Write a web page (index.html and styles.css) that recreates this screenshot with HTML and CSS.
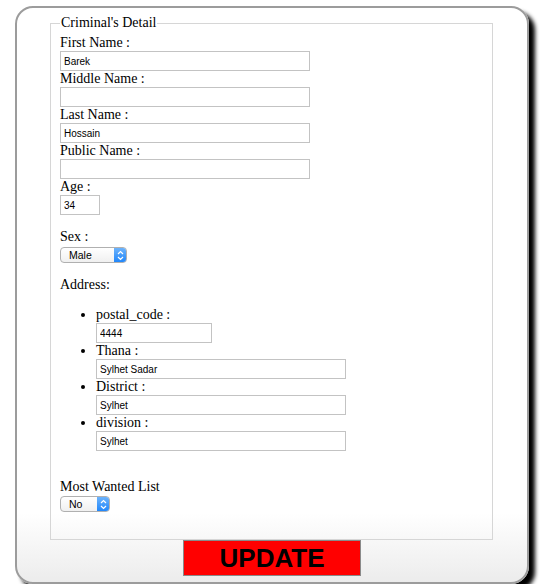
FILE: index.html
```html
<!DOCTYPE html>
<html>
<head>
<meta charset="utf-8">
<link rel="stylesheet" href="styles.css">
</head>
<body>
<form class="card">
  <fieldset class="detail">
    <legend class="legend">Criminal's Detail</legend>
    <div class="field"><label class="lbl">First Name :</label><input class="txt" type="text" value="Barek"></div>
    <div class="field"><label class="lbl">Middle Name :</label><input class="txt" type="text" value=""></div>
    <div class="field"><label class="lbl">Last Name :</label><input class="txt" type="text" value="Hossain"></div>
    <div class="field"><label class="lbl">Public Name :</label><input class="txt" type="text" value=""></div>
    <div class="field"><label class="lbl">Age :</label><input class="txt age" type="text" value="34"></div>
    <div class="field gap"><label class="lbl">Sex :</label>
      <span class="sel sel-sex"><select class="sel-input"><option>Male</option><option>Female</option></select><span class="arrows"><svg width="7" height="11" viewBox="0 0 7 11"><path d="M1 4 L3.5 1.5 L6 4 M1 7 L3.5 9.5 L6 7" fill="none" stroke="#fff" stroke-width="1.2"/></svg></span></span>
    </div>
    <div class="field gap"><label class="lbl">Address:</label>
      <ul class="addr">
        <li><label class="lbl">postal_code :</label><input class="txt postal" type="text" value="4444"></li>
        <li><label class="lbl">Thana :</label><input class="txt" type="text" value="Sylhet Sadar"></li>
        <li><label class="lbl">District :</label><input class="txt" type="text" value="Sylhet"></li>
        <li><label class="lbl">division :</label><input class="txt" type="text" value="Sylhet"></li>
      </ul>
    </div>
    <div class="field gap2"><label class="lbl">Most Wanted List</label>
      <span class="sel sel-mw"><select class="sel-input"><option>No</option><option>Yes</option></select><span class="arrows"><svg width="7" height="11" viewBox="0 0 7 11"><path d="M1 4 L3.5 1.5 L6 4 M1 7 L3.5 9.5 L6 7" fill="none" stroke="#fff" stroke-width="1.2"/></svg></span></span>
    </div>
  </fieldset>
  <div class="actions"><button class="update" type="button">UPDATE</button></div>
</form>
</body>
</html>
```
FILE: styles.css
```css
html, body {
  margin: 0;
  padding: 0;
  background: #fff;
}
body {
  font-family: "Liberation Serif", "Times New Roman", serif;
  font-size: 14px;
  color: #000;
}
.card {
  box-sizing: border-box;
  width: 514px;
  height: 578px;
  margin: 6px 0 0 15px;
  border: 2px solid #9c9c9c;
  border-radius: 18px;
  box-shadow: 6px 6px 4px #000;
  background: linear-gradient(to bottom, #ffffff 0%, #ffffff 88%, #ececec 100%);
  padding: 7px 0 0 33px;
}
.detail {
  box-sizing: border-box;
  width: 443px;
  margin: 0;
  border: 1px solid #d6d6d6;
  padding: 4px 9px 27px 9px;
  min-width: 0;
}
.legend {
  padding: 0 1px;
  line-height: 16px;
  font-size: 14px;
}
.field {
  margin: 0;
}
.gap {
  margin-top: 14px;
}
.gap2 {
  margin-top: 28px;
}
.lbl {
  display: block;
  line-height: 16px;
  height: 16px;
}
.txt {
  display: block;
  box-sizing: border-box;
  width: 250px;
  height: 20px;
  margin: 0;
  border: 1px solid #c3c3c3;
  padding: 0 3px;
  font-family: "Liberation Sans", Arial, sans-serif;
  font-size: 10px;
  color: #000;
  background: #fff;
  outline: none;
}
.age {
  width: 40px;
}
.postal {
  width: 116px;
}
.addr {
  margin: 14px 0 0 0;
  padding-left: 36px;
  list-style: disc;
}
.addr li {
  margin: 0;
}
.sel {
  position: relative;
  display: block;
  box-sizing: border-box;
  height: 16px;
  margin-top: 2px;
  border: 1px solid #b0b0b0;
  border-radius: 4px;
  background: linear-gradient(to bottom, #ffffff, #f0f0f0);
  overflow: hidden;
}
.sel-sex {
  width: 67px;
}
.sel-mw {
  width: 50px;
  margin-top: 1px;
}
.sel-input {
  -webkit-appearance: none;
  appearance: none;
  display: block;
  width: 100%;
  height: 14px;
  margin: 0;
  border: 0;
  padding: 0 0 0 8px;
  background: transparent;
  font-family: "Liberation Sans", Arial, sans-serif;
  font-size: 10.5px;
  line-height: 14px;
  color: #000;
  outline: none;
}
.arrows {
  position: absolute;
  top: -1px;
  right: -1px;
  bottom: -1px;
  width: 13px;
  border-radius: 0 4px 4px 0;
  background: linear-gradient(to bottom, #72b6fb, #1c84fa);
  display: flex;
  align-items: center;
  justify-content: center;
}
.actions {
  display: flex;
  justify-content: center;
  margin-left: -33px;
}
.update {
  box-sizing: border-box;
  width: 178px;
  height: 36px;
  margin: 0;
  border: 1px solid #8a8a8a;
  background: #ff0000;
  font-family: "Liberation Sans", Arial, sans-serif;
  font-weight: bold;
  font-size: 26px;
  color: #000;
  padding: 0;
  line-height: 34px;
}
```
